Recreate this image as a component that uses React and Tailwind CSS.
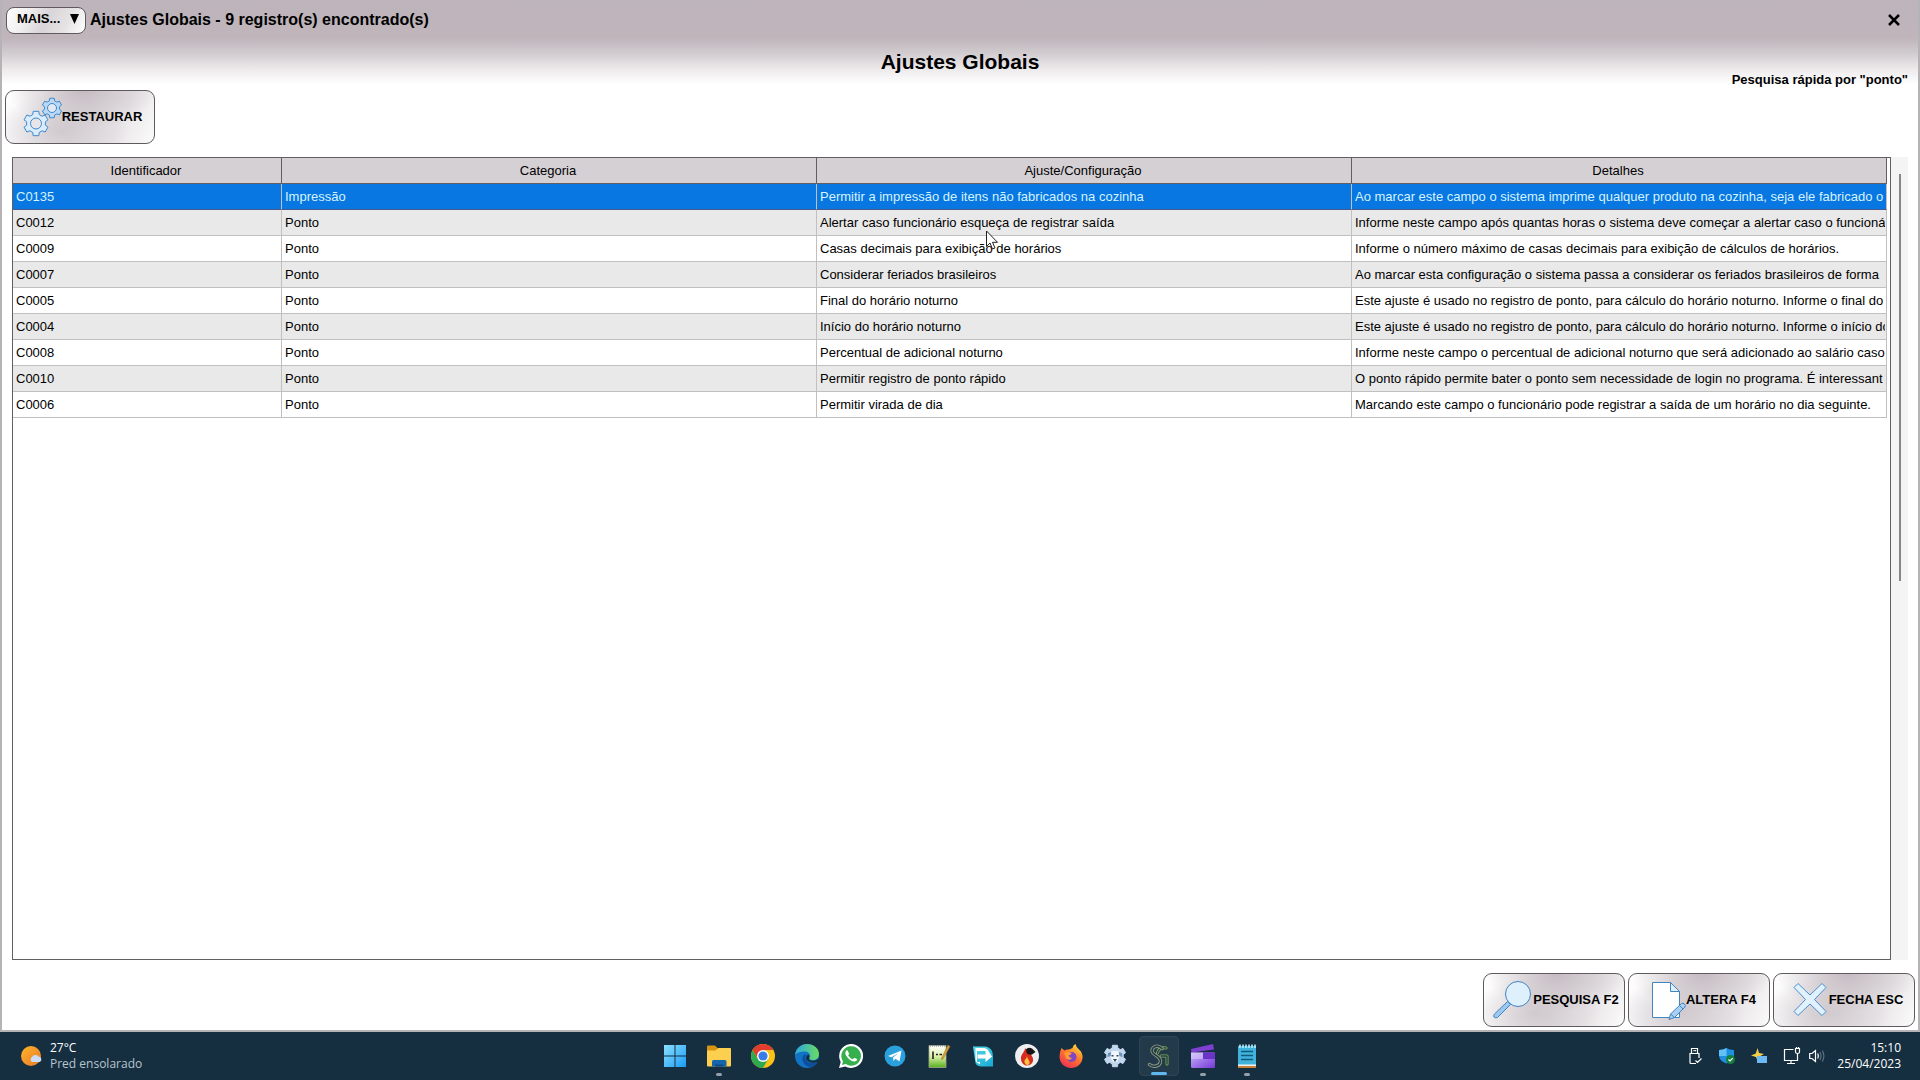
const linhas = [
    { id: "C0135", categoria: "Impressão", ajuste: "Permitir a impressão de itens não fabricados na cozinha", detalhes: "Ao marcar este campo o sistema imprime qualquer produto na cozinha, seja ele fabricado o" },
    { id: "C0012", categoria: "Ponto", ajuste: "Alertar caso funcionário esqueça de registrar saída", detalhes: "Informe neste campo após quantas horas o sistema deve começar a alertar caso o funcioná" },
    { id: "C0009", categoria: "Ponto", ajuste: "Casas decimais para exibição de horários", detalhes: "Informe o número máximo de casas decimais para exibição de cálculos de horários." },
    { id: "C0007", categoria: "Ponto", ajuste: "Considerar feriados brasileiros", detalhes: "Ao marcar esta configuração o sistema passa a considerar os feriados brasileiros de forma" },
    { id: "C0005", categoria: "Ponto", ajuste: "Final do horário noturno", detalhes: "Este ajuste é usado no registro de ponto, para cálculo do horário noturno. Informe o final do" },
    { id: "C0004", categoria: "Ponto", ajuste: "Início do horário noturno", detalhes: "Este ajuste é usado no registro de ponto, para cálculo do horário noturno. Informe o início do" },
    { id: "C0008", categoria: "Ponto", ajuste: "Percentual de adicional noturno", detalhes: "Informe neste campo o percentual de adicional noturno que será adicionado ao salário caso" },
    { id: "C0010", categoria: "Ponto", ajuste: "Permitir registro de ponto rápido", detalhes: "O ponto rápido permite bater o ponto sem necessidade de login no programa. É interessant" },
    { id: "C0006", categoria: "Ponto", ajuste: "Permitir virada de dia", detalhes: "Marcando este campo o funcionário pode registrar a saída de um horário no dia seguinte." },
];

const colunas = ["Identificador", "Categoria", "Ajuste/Configuração", "Detalhes"];

// Engrenagem de 6 dentes
function pontosEngrenagem(cx, cy, r) {
    const pontos = [];
    for (let i = 0; i < 6; i++) {
        const base = -90 + i * 60;
        [[-20, 0.76], [-13, 1], [13, 1], [20, 0.76]].forEach(([desvio, raio]) => {
            const a = ((base + desvio) * Math.PI) / 180;
            pontos.push(`${(cx + r * raio * Math.cos(a)).toFixed(2)},${(cy + r * raio * Math.sin(a)).toFixed(2)}`);
        });
    }
    return pontos.join(" ");
}

function IconeRestaurar() {
    return (
        <svg viewBox="0 0 42 42" className="w-[42px] h-[42px]" stroke="#3f88cc" strokeLinejoin="round" aria-hidden="true">
            <polygon points={pontosEngrenagem(32, 12, 10)} fill="#b9d9f7" />
            <circle cx="32" cy="12" r="4.5" fill="#e3eaf3" />
            <polygon points={pontosEngrenagem(16, 27.5, 12.5)} fill="#d9edfc" />
            <circle cx="16" cy="27.5" r="5.5" fill="#e8e5e9" />
        </svg>
    );
}

function IconePesquisa() {
    return (
        <svg viewBox="0 0 42 42" className="w-[42px] h-[42px]" stroke="#4284bd" strokeLinejoin="round" aria-hidden="true">
            <path d="M16.5 22.5 L19.5 25.5 L6.5 38.5 Q4.5 39.5 3 38 Q2 36.500 3.500 35 Z" fill="#9cc7f0" />
            <circle cx="27" cy="15" r="12.5" fill="#dff0fd" />
        </svg>
    );
}

function IconeAltera() {
    return (
        <svg viewBox="0 0 42 42" className="w-[42px] h-[42px]" stroke="#4284bd" strokeLinejoin="round" aria-hidden="true">
            <path d="M8.500 3.500 H26.500 L35.500 12.500 V38.500 H8.500 Z" fill="#fff" />
            <path d="M26.500 3.500 V12.500 H35.500 Z" fill="#dff0fd" />
            <path d="M25 40.500 L26.500 35 L37.500 24.500 Q39 23.500 40.500 25 Q42 26.500 41 28 L30.500 38.500 Z" fill="#a9cff4" />
            <path d="M26.500 35 L30.500 38.500 M35.500 26.500 L39 30" fill="none" />
        </svg>
    );
}

function IconeFecha() {
    return (
        <svg viewBox="0 0 42 42" className="w-[42px] h-[42px]" stroke="#4a8ecb" strokeLinejoin="round" aria-hidden="true">
            <path d="M11 4.500 L23 16 L35 4.500 L39 8.500 L27.500 20.500 L39 32.500 L35 36.500 L23 25 L11 36.500 L7 32.500 L18.500 20.500 L7 8.500 Z" fill="#e1f1fd" />
        </svg>
    );
}

function Botao({ icone, children, largura }) {
    return (
        <button
            type="button"
            className={`${largura} flex h-[54px] items-center justify-center rounded-[9px] border border-[#5f5a5e] bg-[radial-gradient(ellipse_50%_75%_at_52%_0%,#c5bcc2,transparent),radial-gradient(ellipse_45%_70%_at_38%_75%,#d0c9ce,transparent),linear-gradient(115deg,#fff_0%,#f6f5f6_22%,#e6e2e5_50%,#e9e6e8_75%,#fbfbfb_100%)] pl-0.5 text-[13px] font-bold whitespace-nowrap text-black`}
        >
            {icone}
            {children}
        </button>
    );
}

const icones = [
    {
        nome: "Iniciar",
        svg: (
            <>
                <linearGradient id="win" x1="0" y1="0" x2="1" y2="1"><stop offset="0" stopColor="#8be0ff" /><stop offset="1" stopColor="#1a9bf5" /></linearGradient>
                <path fill="url(#win)" d="M1 1h10.500v10.500H1zM12.500 1H23v10.500H12.500zM1 12.500h10.500V23H1zM12.500 12.500H23V23H12.500z" />
            </>
        ),
    },
    {
        nome: "Explorador de Arquivos",
        aberto: true,
        svg: (
            <>
                <path fill="#d9950f" d="M0 2.500Q0 1.500 1 1.500H8L10.500 4V9H0Z" />
                <path fill="#fcd04e" d="M0 6.500H8.500L11 4H23Q24 4 24 5V21.500Q24 22.500 23 22.500H1Q0 22.500 0 21.500Z" />
                <path fill="#1565ad" d="M5 22.500V17.500Q5 16 6.500 16H18Q19.500 16 19.500 17.500V22.500Z" />
                <path fill="#0b4a86" d="M8 22.500V20.500H16.500V22.500Z" />
            </>
        ),
    },
    {
        nome: "Chrome",
        svg: (
            <>
                <circle cx="12" cy="12" r="12" fill="#fbc116" />
                <path fill="#e33b2e" d="M1.610 6A12 12 0 0 1 22.390 6H12V12L6.800 15Z" />
                <path fill="#2da94f" d="M1.610 6A12 12 0 0 0 12 24L17.200 15L12 12L6.800 15Z" />
                <circle cx="12" cy="12" r="6" fill="#fff" />
                <circle cx="12" cy="12" r="4.600" fill="#3b7de8" />
            </>
        ),
    },
    {
        nome: "Edge",
        svg: (
            <>
                <linearGradient id="edge" x1="0" y1="0" x2="1" y2="0"><stop offset="0" stopColor="#2aa7e0" /><stop offset="1" stopColor="#6bdc60" /></linearGradient>
                <circle cx="12" cy="12" r="12" fill="#1273c4" />
                <path fill="url(#edge)" d="M0 11C1 4 6 0 12 0C19 0 24 4.500 24 10C24 14 21 16 18 16C15 16 13.500 15 14.500 13.500C16 11 14 7.500 10 7.500C5.500 7.500 1.500 9 0 11Z" />
                <path fill="#0d4f9e" d="M8 12C6 17 10 23 16 23C19 22 21 20.500 22.500 18C18 20 12 19 10.500 15C10 13 10.500 11.500 11.500 10.500C10 10.300 8.500 11 8 12Z" />
                <path fill="#152e40" d="M14.200 13.600C13.500 15.500 15.500 17 18 16.800C20 16.700 22 16 23.400 14.500L24 17L22.600 18C18 20 12 18 11 14.500Q11 12 12.600 10.800Q15.500 11.300 14.200 13.600Z" />
            </>
        ),
    },
    {
        nome: "WhatsApp",
        svg: (
            <>
                <path fill="#fff" d="M0 24L1.700 17.900A12 12 0 1 1 6.200 22.400Z" />
                <path fill="#36b04c" d="M2.900 21.100L4 17.400A9.800 9.800 0 1 1 6.700 20.100Z" />
                <path fill="#fff" d="M8.600 6.500C8.200 6 7.500 6.200 7.100 6.700C5.500 8.500 6.500 11 8.500 13.500C11 16.500 14 18 16 17.500C17.500 17.200 18.200 16 18 15L15.300 13.700L13.900 15.300C12 14.800 10 12.800 9.200 11.200L10.200 9.800Z" />
            </>
        ),
    },
    {
        nome: "Telegram",
        svg: (
            <>
                <circle cx="12" cy="12" r="10.500" fill="#2aa1dd" />
                <path fill="#fff" d="M5 12L18.500 6.500L16.500 17.500L12.500 14.800L10.500 17L10 13.500L15.500 9L8.500 13.200Z" />
            </>
        ),
    },
    {
        nome: "Notepad++",
        svg: (
            <>
                <linearGradient id="npp" x1="0" y1="0" x2="0" y2="1"><stop offset="0" stopColor="#fff" /><stop offset=".5" stopColor="#dcf0a8" /><stop offset="1" stopColor="#55b01c" /></linearGradient>
                <path fill="url(#npp)" stroke="#a5a88e" strokeWidth=".8" d="M2 1.500H19V23.500H2Z" />
                <path fill="none" stroke="#222" strokeWidth="1.600" d="M6 7.500V15M9 10.500H11M12.500 10.500H15" />
                <path fill="none" stroke="#777" strokeWidth="1" strokeDasharray="1 1" d="M3 2H18" />
                <path fill="#d9a23b" stroke="#9a6b20" strokeWidth=".5" d="M21 1L23 2.500L16 15L14.500 15.500L14.800 13.500Z" />
            </>
        ),
    },
    {
        nome: "Transferência",
        svg: (
            <>
                <linearGradient id="transf" x1="0" y1="0" x2="1" y2="1"><stop offset="0" stopColor="#54dcea" /><stop offset="1" stopColor="#19a7d3" /></linearGradient>
                <path fill="url(#transf)" d="M2 2.500H15Q22 4 22 12V22.500H10Q4 22 4 16Z" />
                <path fill="#fff" d="M4.500 4H13Q17 4.500 18 8L21 12.500L14.500 18V14.500H6.500V10.500H14.500V7H6V18H9V20Q4.500 19 4.500 15Z" />
            </>
        ),
    },
    {
        nome: "Gravador",
        svg: (
            <>
                <circle cx="12" cy="12" r="12" fill="#eeeef1" />
                <path fill="#d92a20" d="M10 4C10 8 5.500 10 6 15C6.200 19 9 21.500 12 21.500C16 21.500 18.500 18.500 18 15C17.500 11 14 9 10 4Z" />
                <path fill="#ffc33f" d="M12 12C12 15 9 15.500 9.500 18C10 20 11 21 12.200 21C14 21 15 19.500 14.500 17.500C14 16 12.500 15 12 12Z" />
                <path fill="#151515" d="M11 5.500Q13 2.500 17 4.500L20.500 8L17 10.500Q13 11.500 11.500 8.500Z" />
            </>
        ),
    },
    {
        nome: "Firefox",
        svg: (
            <>
                <linearGradient id="fox" x1=".8" y1="0" x2=".2" y2="1"><stop offset="0" stopColor="#ffdf3f" /><stop offset=".45" stopColor="#ff7a28" /><stop offset="1" stopColor="#ee2a59" /></linearGradient>
                <path fill="url(#fox)" d="M2.500 4L5.500 6.500Q7.500 5 10 5.500L13.500 4Q14 1 16.500 0Q17 3 20 5.500Q24 9 23.500 14C23 20 18 24 12 24C5.500 24 .5 19 .5 12.500Q.5 8 2.500 4Z" />
                <circle cx="12.500" cy="13" r="5" fill="#8047c6" />
                <path fill="#ff9a32" d="M5 9Q9 7 13 9.500Q11.500 11 9.500 11.500Q10.500 14 13 14Q11.500 17 7.500 15Z" />
            </>
        ),
    },
    {
        nome: "Configurações",
        svg: (
            <>
                <polygon points={pontosEngrenagem(12, 12, 11)} fill="#c3d8ee" stroke="#c3d8ee" strokeLinejoin="round" />
                <path fill="#6d92bd" d="M5 9L9 8L8 12L4.500 13ZM15 8L19 9L19.500 13L16 12Z" />
                <path fill="#f1f6fb" d="M8.500 7H15.500L16.500 13L14 18H10L7.500 13Z" />
                <path fill="#33465f" d="M10 15H14L12 18ZM8.500 11H10.500V12.500H8.500ZM13.500 11H15.500V12.500H13.500Z" />
            </>
        ),
    },
    {
        nome: "SG Sistemas",
        ativo: true,
        // Emblema em fitas: contorno claro com miolo escuro
        svg: (
            <g fill="none" strokeLinecap="round" strokeLinejoin="round">
                <path id="fita-verde" stroke="#7fb04c" strokeWidth="3" d="M19 4Q12 3 10.500 9M14 12H20V20" />
                <path stroke="#233a4a" strokeWidth="1.400" d="M19 4Q12 3 10.500 9M14 12H20V20" />
                <path stroke="#8f9a80" strokeWidth="3.400" d="M15 4.500C10 -.5 2.500 4 6 9C8.500 12 14 13 13.500 17.500C13 22.500 6 23.500 2.500 20.500" />
                <path stroke="#233a4a" strokeWidth="1.600" d="M15 4.500C10 -.5 2.500 4 6 9C8.500 12 14 13 13.500 17.500C13 22.500 6 23.500 2.500 20.500" />
            </g>
        ),
    },
    {
        nome: "Clipchamp",
        aberto: true,
        svg: (
            <>
                <linearGradient id="clip" x1="0" y1="0" x2="1" y2="1"><stop offset="0" stopColor="#cbb2fa" /><stop offset="1" stopColor="#7339d6" /></linearGradient>
                <path fill="#7f3fd2" d="M0 5L22 0L23 5.500L.5 8.500Z" />
                <path fill="url(#clip)" d="M0 8.500H24V22.500Q24 24 22.500 24H1.500Q0 24 0 22.500Z" />
                <path fill="#6a33c9" d="M12 8.500H24V15H12Z" />
                <path fill="#e2d3ff" opacity=".5" d="M0 8.500H12V15H0Z" />
            </>
        ),
    },
    {
        nome: "Bloco de Notas",
        aberto: true,
        svg: (
            <>
                <path fill="#3fb3dc" d="M3 2H21V21H3Z" />
                <path fill="#f3f3f3" d="M3 20.500H21V22H3Z" />
                <path fill="#c5803a" d="M3 22H21V24H3Z" />
                <path fill="none" stroke="#c9eefb" strokeWidth="1.500" d="M5 .5V4M8 .5V4M11 .5V4M14 .5V4M17 .5V4M20 .5V4" />
                <path fill="none" stroke="#125a7c" strokeWidth="1.300" d="M6 7.500H18M6 11.500H18M6 15.500H18" />
            </>
        ),
    },
];

function BarraTarefas() {
    return (
        <footer className="flex h-12 shrink-0 items-center bg-[#152e40] font-['Open_Sans','Noto_Sans',sans-serif] text-xs leading-4 text-white">
            <div className="flex flex-1 items-center gap-2 pl-5">
                <svg viewBox="0 0 22 22" className="h-[22px] w-[22px]" aria-hidden="true">
                    <linearGradient id="sol" x1="0" y1="0" x2="1" y2="1"><stop offset="0" stopColor="#ffb52a" /><stop offset="1" stopColor="#e8792a" /></linearGradient>
                    <circle cx="11" cy="11" r="10" fill="url(#sol)" />
                    <path fill="#cddcf6" d="M12 17a3 3 0 0 1 0-5 4 4 0 0 1 6.500-.5A3 3 0 0 1 20 17Z" />
                </svg>
                <div>
                    <p>27°C</p>
                    <p className="text-[#b9c5cf]">Pred ensolarado</p>
                </div>
            </div>

            <nav className="flex" aria-label="Aplicativos">
                {icones.map((app) => (
                    <button key={app.nome} type="button" aria-label={app.nome} className="flex h-12 w-11 items-center justify-center">
                        <span
                            className={`relative flex h-10 w-10 items-center justify-center rounded ${app.ativo ? "border border-[#2c4453] bg-[#233a4a]" : ""}`}
                        >
                            <svg viewBox="0 0 24 24" className="h-6 w-6">{app.svg}</svg>
                            {app.aberto && <i className="absolute bottom-0 h-[3px] w-1.5 rounded-full bg-[#95a1aa]" />}
                            {app.ativo && <i className="absolute bottom-0 h-[3px] w-4 rounded-full bg-[#5fb8ee]" />}
                        </span>
                    </button>
                ))}
            </nav>

            <div className="flex flex-1 items-center justify-end pr-[19px]">
                <div className="mr-3 flex items-center gap-4">
                    <svg viewBox="0 0 16 18" className="h-[18px] w-4" fill="none" stroke="#fff" strokeWidth="1.200" aria-hidden="true">
                        <path d="M4.500 6V1.500H10.500V6M7 3V4.200M8.500 3V4.200M9 16.500H4Q3 16.500 3 15.500V6.500H12V11M8.500 13.500L10.500 15.500L14.500 11.500" />
                    </svg>
                    <svg viewBox="0 0 16 16" className="h-4 w-4" aria-hidden="true">
                        <path fill="#1f8fe0" d="M7.500 0Q10.500 2 15 2V8Q14 13.500 7.500 15.500Q1 13.500 0 8V2Q4.500 2 7.500 0Z" />
                        <path fill="#63c1f7" d="M7.500 0V8H0V2Q4.500 2 7.500 0Z" />
                        <circle cx="11.500" cy="11.500" r="4.500" fill="#14803c" />
                        <path fill="none" stroke="#fff" strokeWidth="1.200" d="M9.500 11.500L11 13L13.700 10.200" />
                    </svg>
                    <svg viewBox="0 0 16 16" className="h-4 w-4" aria-hidden="true">
                        <path fill="#f7ce46" d="M6.500 0L8 5L13 6L8.500 8.500L7 14L5 9L0 7.500L4.800 5.500Z" />
                        <path fill="#6cb9f3" d="M6 8H16V15H6Z" />
                    </svg>
                    <div className="flex items-center gap-2">
                        <svg viewBox="0 0 18 18" className="h-[18px] w-[18px]" fill="none" stroke="#fff" strokeWidth="1.200" aria-hidden="true">
                            <path d="M10.500 2.500H1.500V13.500H14.500V9M8 13.500V16.500M4 16.500H12M12.500 1.500H16.500V5Q16.500 6.500 14.500 6.500Q12.500 6.500 12.500 5ZM14.500 6.500V9M13.500 0V1.500M15.500 0V1.500" />
                        </svg>
                        <svg viewBox="0 0 16 16" className="h-4 w-4" fill="none" stroke="#fff" strokeWidth="1.200" aria-hidden="true">
                            <path d="M.7 5.500H3L6.500 2.500V13.500L3 10.500H.7ZM8.700 5.500Q10 8 8.700 10.500" />
                            <path d="M11 4Q13 8 11 12M13.300 2.500Q16.500 8 13.300 13.500" stroke="#5d7280" />
                        </svg>
                    </div>
                </div>
                <div className="text-right">
                    <p>15:10</p>
                    <p>25/04/2023</p>
                </div>
            </div>
        </footer>
    );
}

export default function App() {
    return (
        <div className="relative flex min-h-screen flex-col font-['Liberation_Sans',Arial,sans-serif] text-black">
            <main className="flex flex-1 flex-col border-x-2 border-b-2 border-[#b5b3b6] bg-[linear-gradient(to_bottom,#bdb3ba_0px,#bfb5bb_38px,#d2cdd1_54px,#ece9eb_69px,#fff_84px)]">
                {/* Barra de título */}
                <header className="flex h-[38px] items-center pt-0.5 pr-3.5 pl-1">
                    <button
                        type="button"
                        className="flex h-[27px] w-20 items-center justify-between rounded-lg border border-[#5f5a5e] bg-[linear-gradient(115deg,#fff_0%,#f1eff0_25%,#d9d4d7_50%,#e6e3e5_75%,#fff_100%)] pr-1.5 pb-0.5 pl-2.5 text-[13px] font-bold"
                    >
                        MAIS...
                        <svg viewBox="0 0 9 10" className="h-2.5 w-[9px]" aria-hidden="true">
                            <path d="M0 0H9L4.500 10Z" />
                        </svg>
                    </button>
                    <span className="ml-1 text-base font-bold">Ajustes Globais - 9 registro(s) encontrado(s)</span>
                    <button type="button" aria-label="Fechar" className="ml-auto p-1">
                        <svg viewBox="0 0 12 12" className="h-3 w-3" stroke="#000" strokeWidth="2.500" aria-hidden="true">
                            <path d="M1 1L11 11M11 1L1 11" />
                        </svg>
                    </button>
                </header>

                <div className="grid h-[52px] grid-cols-3 px-2.5">
                    <h1 className="col-start-2 pt-3 text-center text-[21px] leading-6 font-bold">Ajustes Globais</h1>
                    <p className="pt-8 text-right text-[13px] leading-5 font-bold">Pesquisa rápida por "ponto"</p>
                </div>

                <div className="pl-[3px]">
                    <Botao icone={<IconeRestaurar />} largura="w-[150px]">RESTAURAR</Botao>
                </div>

                {/* Tabela */}
                <div className="mx-2.5 mt-[13px] flex flex-1">
                    <div className="flex-1 border border-[#625e62] bg-white pr-[3px]">
                        <table className="w-full table-fixed border-separate border-spacing-0 text-[13px]">
                            <thead>
                                <tr className="bg-[#d5d0d4] leading-[25px]">
                                    {colunas.map((coluna) => (
                                        <th key={coluna} className="border-r border-b border-[#625e62] p-0 pr-0.5 font-normal first:w-[269px]">
                                            {coluna}
                                        </th>
                                    ))}
                                </tr>
                            </thead>
                            <tbody>
                                {linhas.map((linha, i) => (
                                    <tr
                                        key={linha.id}
                                        className={
                                            i === 0
                                                ? "bg-[#0877e1] leading-6 text-[#d5f3ff] *:border-b-[#4a5a8c]"
                                                : "leading-6 odd:bg-white even:bg-[#e9e9e9] *:border-b-[#c0c0c0]"
                                        }
                                    >
                                        {[linha.id, linha.categoria, linha.ajuste, linha.detalhes].map((valor, c) => (
                                            <td key={c} className="border-r border-b border-r-[#c0c0c0] p-0 pt-px pr-px pl-[3px]">
                                                <div className="overflow-hidden whitespace-nowrap">{valor}</div>
                                            </td>
                                        ))}
                                    </tr>
                                ))}
                            </tbody>
                        </table>
                    </div>
                    <div className="w-[17px] bg-[#f4f4f4] pt-[17px] pl-2">
                        <div className="h-[407px] w-0.5 bg-[#868686]" />
                    </div>
                </div>

                <div className="mt-[13px] flex justify-end gap-[3px] pr-[3px] pb-[3px]">
                    <Botao icone={<IconePesquisa />} largura="w-[142px]">PESQUISA F2</Botao>
                    <Botao icone={<IconeAltera />} largura="w-[142px]">ALTERA F4</Botao>
                    <Botao icone={<IconeFecha />} largura="w-[142px]">FECHA ESC</Botao>
                </div>
            </main>

            <BarraTarefas />

            {/* Cursor */}
            <svg viewBox="0 0 13 20" className="pointer-events-none absolute top-[230px] left-[986px] h-5 w-[13px]" aria-hidden="true">
                <path d="M.5 1V16.500L4 13L6.500 19L9 18L6.500 12.300H11.500Z" fill="#fff" stroke="#222" />
            </svg>
        </div>
    );
}
